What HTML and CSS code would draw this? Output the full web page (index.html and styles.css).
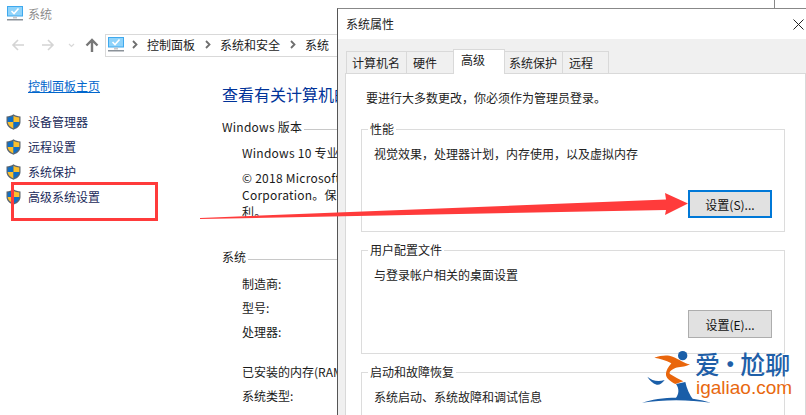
FILE: index.html
```html
<!DOCTYPE html>
<html lang="zh-CN">
<head>
<meta charset="utf-8">
<title>系统属性</title>
<link rel="stylesheet" href="styles.css">
</head>
<body>
<svg class="defs" width="0" height="0" aria-hidden="true">
  <symbol id="pc" viewBox="0 0 16 15">
    <rect x="0" y="0" width="16" height="10.5" fill="#3fa9ee"/>
    <rect x="1" y="1" width="14" height="8.5" fill="#8fd3fa"/>
    <path d="M4.5 5 L7 7.5 L11.5 2.5" fill="none" stroke="#fff" stroke-width="1.6"/>
    <rect x="6" y="10.5" width="4" height="2" fill="#c3c7cc"/>
    <rect x="0" y="13" width="16" height="1.5" fill="#8b9299"/>
  </symbol>
  <symbol id="shield" viewBox="0 0 15 16">
    <path d="M7.5 0.3 C5.5 1.8 3 2.3 0.5 2.4 V8 C0.5 11.8 3.5 14.3 7.5 15.7 C11.5 14.3 14.5 11.8 14.5 8 V2.4 C12 2.3 9.5 1.8 7.5 0.3Z" fill="#5c6670"/>
    <path d="M7.5 1.7 C5.8 2.9 3.8 3.3 1.7 3.4 V8 H7.5Z" fill="#0f6fc6"/>
    <path d="M7.5 1.7 C9.2 2.9 11.2 3.3 13.3 3.4 V8 H7.5Z" fill="#fbc02d"/>
    <path d="M1.7 8 C1.8 11 4.2 13.2 7.5 14.4 V8Z" fill="#fbc02d"/>
    <path d="M13.3 8 C13.2 11 10.8 13.2 7.5 14.4 V8Z" fill="#0f6fc6"/>
  </symbol>
</svg>

<section class="window">
  <header class="titlebar">
    <svg class="pc-icon"><use href="#pc"/></svg>
    <span>系统</span>
  </header>
  <nav class="navbar">
    <svg class="nav-icons" width="105" height="16" viewBox="0 0 105 16">
      <path d="M24 8 H13 M18 3 L13 8 L18 13" fill="none" stroke="#d4d4d4" stroke-width="1.6"/>
      <path d="M42 8 H53 M48 3 L53 8 L48 13" fill="none" stroke="#d4d4d4" stroke-width="1.6"/>
      <path d="M69 7 L71.500 9.500 L74 7" fill="none" stroke="#d8d8d8" stroke-width="1.2"/>
      <path d="M92 15 V3 M86.500 8.500 L92 3 L97.500 8.500" fill="none" stroke="#777" stroke-width="2.400"/>
    </svg>
    <div class="address">
      <svg class="pc-icon addr-icon"><use href="#pc"/></svg>
      <svg class="chev" width="7" height="9" viewBox="0 0 7 9"><path d="M2 1 L5.500 4.500 L2 8" fill="none" stroke="#6e6e6e" stroke-width="1.800"/></svg><span>控制面板</span>
      <svg class="chev" width="7" height="9" viewBox="0 0 7 9"><path d="M2 1 L5.500 4.500 L2 8" fill="none" stroke="#6e6e6e" stroke-width="1.800"/></svg><span>系统和安全</span>
      <svg class="chev" width="7" height="9" viewBox="0 0 7 9"><path d="M2 1 L5.500 4.500 L2 8" fill="none" stroke="#6e6e6e" stroke-width="1.800"/></svg><span>系统</span>
    </div>
  </nav>
  <div class="columns">
    <aside class="sidebar">
      <a class="home">控制面板主页</a>
      <ul class="tasks">
        <li><svg class="shield"><use href="#shield"/></svg>设备管理器</li>
        <li><svg class="shield"><use href="#shield"/></svg>远程设置</li>
        <li><svg class="shield"><use href="#shield"/></svg>系统保护</li>
        <li><svg class="shield"><use href="#shield"/></svg>高级系统设置</li>
      </ul>
    </aside>
    <main class="details">
      <h1>查看有关计算机的基本信息</h1>
      <h2 class="rule-head"><span>Windows 版本</span></h2>
      <div class="indent">
        <p class="edition">Windows 10 专业版</p>
        <p class="copy">© 2018 Microsoft<br>Corporation。保留所有权<br>利。</p>
      </div>
      <h2 class="rule-head system"><span>系统</span></h2>
      <dl class="indent specs">
        <dt>制造商:</dt>
        <dt>型号:</dt>
        <dt>处理器:</dt>
        <dt class="gap">已安装的内存(RAM):</dt>
        <dt>系统类型:</dt>
      </dl>
    </main>
  </div>
</section>

<section class="dialog">
  <header class="dlg-title">
    <span>系统属性</span>
    <svg width="11" height="11" viewBox="0 0 11 11"><path d="M0.500 0.500 L10.500 10.500 M10.500 0.500 L0.500 10.500" stroke="#222" stroke-width="1"/></svg>
  </header>
  <div class="dlg-body">
    <div class="tabs">
      <span class="tab t1">计算机名</span>
      <span class="tab t2">硬件</span>
      <span class="tab active">高级</span>
      <span class="tab t4">系统保护</span>
      <span class="tab t5">远程</span>
    </div>
    <div class="panel">
      <p class="notice">要进行大多数更改&#65292;你必须作为管理员登录。</p>
      <fieldset class="group g1">
        <legend>性能</legend>
        <p>视觉效果&#65292;处理器计划&#65292;内存使用&#65292;以及虚拟内存</p>
        <button class="btn focus">设置(S)...</button>
      </fieldset>
      <fieldset class="group g2">
        <legend>用户配置文件</legend>
        <p>与登录帐户相关的桌面设置</p>
        <button class="btn">设置(E)...</button>
      </fieldset>
      <fieldset class="group g3">
        <legend>启动和故障恢复</legend>
        <p>系统启动、系统故障和调试信息</p>
      </fieldset>
    </div>
  </div>
</section>

<svg class="annotation" width="806" height="415" viewBox="0 0 806 415" aria-hidden="true">
  <rect x="12.500" y="183.500" width="144" height="36" fill="none" stroke="#ff3b3b" stroke-width="3"/>
  <path d="M200 218 L666 199.500 L665 193 L688 203.500 L665 215 L666 210 L200 219Z" fill="#ff3b3b"/>
</svg>

<div class="logo">
  <svg class="logo-mark" width="180" height="75" viewBox="0 0 540 225" aria-hidden="true">
    <circle cx="170" cy="47" r="14" fill="#1a5ea8"/>
    <path d="M85 53 C105 46 125 44 140 50 C160 58 175 70 192 73 C175 82 160 80 148 84 C135 90 128 96 132 102 C145 110 160 118 172 124 L148 132 C132 124 118 114 120 100 C122 86 132 76 136 70 C120 60 100 56 85 53Z" fill="#e9660c"/>
    <path d="M150 132 L178 126 C182 145 190 165 204 182 C185 178 165 176 148 176 C160 162 160 146 150 132Z" fill="#1a5ea8"/>
    <path d="M64 110 C78 122 95 126 116 120 C108 130 100 136 92 134 C80 130 70 120 64 110Z" fill="#1a5ea8"/>
    <path d="M48 188 C100 170 190 166 254 188 C190 178 110 178 48 188Z" fill="#1a5ea8"/>
  </svg>
  <div class="logo-cn">爱 · 尬聊</div>
  <div class="logo-en">igaliao.com</div>
</div>
</body>
</html>
```
FILE: styles.css
```css
html, body {
  margin: 0;
  padding: 0;
  width: 806px;
  height: 415px;
  overflow: hidden;
  background: #fff;
}
body {
  position: relative;
  font-family: "Noto Sans CJK SC", "Noto Sans", sans-serif;
  font-size: 12px;
  color: #1a1a1a;
}
.defs { position: absolute; }
p, h1, h2, ul, dl, dt { margin: 0; padding: 0; font-weight: 400; }

/* Back window */
.window {
  position: absolute;
  left: 0;
  top: 0;
  width: 775px;
  height: 415px;
  border-right: 1px solid #888;
  box-sizing: border-box;
}
.titlebar {
  height: 34px;
  box-sizing: border-box;
  padding: 6px 0 0 7px;
  display: flex;
  align-items: flex-start;
  gap: 5px;
  color: #8c8c8c;
}
.titlebar span { line-height: 16px; }
.pc-icon { width: 16px; height: 15px; flex: none; }
.navbar { height: 23px; display: flex; align-items: center; }
.nav-icons { flex: none; margin-bottom: 2px; }
.address {
  flex: 1;
  height: 23px;
  box-sizing: border-box;
  border: 1px solid #d9d9d9;
  display: flex;
  align-items: center;
  padding: 0 0 2px 2px;
  gap: 9px;
  white-space: nowrap;
}
.addr-icon { margin-right: -2px; }
.chev { flex: none; }
.columns { display: flex; }
.sidebar { width: 222px; flex: none; padding-top: 20px; }
.home {
  display: block;
  margin-left: 28px;
  line-height: 18px;
  color: #0066cc;
  text-decoration: underline;
}
.tasks { list-style: none; margin-top: 14px; padding-left: 6px; }
.tasks li {
  display: flex;
  align-items: center;
  gap: 7px;
  height: 25px;
  color: #1a2a5a;
}
.shield { width: 15px; height: 16px; flex: none; }
.details { width: 115px; flex: none; padding-top: 27px; overflow: hidden; }
.details h1 {
  font-size: 16px;
  line-height: 20px;
  color: #003399;
  white-space: nowrap;
}
.rule-head {
  font-size: 12px;
  line-height: 18px;
  display: flex;
  align-items: center;
  margin-top: 14px;
  letter-spacing: 0.25px;
  white-space: nowrap;
}
.rule-head::after {
  content: "";
  flex: 1;
  height: 1px;
  background: #c8c8c8;
  margin-left: 2px;
  margin-top: 4px;
}
.indent { margin-left: 20px; }
.edition { margin-top: 8px; line-height: 18px; letter-spacing: 0.25px; white-space: nowrap; }
.copy { margin-top: 7px; line-height: 17px; white-space: nowrap; letter-spacing: 0.25px; }
.system { margin-top: 28px; letter-spacing: 0; }
.specs { margin-top: 9px; }
.specs dt { height: 24px; line-height: 18px; white-space: nowrap; }
.specs .gap { margin-top: 16px; }

/* Dialog */
.dialog {
  position: absolute;
  left: 337px;
  top: 8px;
  width: 469px;
  height: 407px;
  box-sizing: border-box;
  border-left: 1px solid #555;
  border-top: 1px solid #888;
  background: #f0f0f0;
}
.dlg-title {
  height: 30px;
  background: #fff;
  display: flex;
  align-items: center;
  justify-content: space-between;
  padding: 0 2px 0 8px;
  line-height: 30px;
  color: #222;
}
.dlg-body { padding: 11px 0 0 7px; }
.tabs { display: flex; align-items: flex-end; height: 23px; padding-left: 2px; position: relative; z-index: 1; }
.tab {
  box-sizing: border-box;
  height: 22px;
  line-height: 21px;
  border: 1px solid #d9d9d9;
  border-bottom: 0;
  margin-left: -1px;
  background: #f0f0f0;
  color: #222;
  white-space: nowrap;
}
.t1 { width: 61px; padding-left: 5px; }
.t2 { width: 48px; padding-left: 6px; }
.active { width: 52px; padding-left: 7px; line-height: 20px; background: #fff; position: relative; z-index: 1; margin-bottom: -1px; height: 25px; }
.t4 { width: 59px; padding-left: 4px; }
.t5 { width: 47px; padding-left: 6px; }
.panel {
  background: #fff;
  border: 1px solid #d9d9d9;
  height: 360px;
  padding: 14px 0 0 15px;
  box-sizing: border-box;
}
.notice { line-height: 20px; color: #222; padding-left: 5px; }
.group {
  margin: 0;
  width: 424px;
  box-sizing: border-box;
  border: 1px solid #dcdcdc;
  padding: 0 0 0 12px;
  position: relative;
}
.group legend { padding: 0 2px; margin-left: -6px; line-height: 16px; color: #222; }
.group p { line-height: 18px; color: #222; margin-top: 8px; }
.g1 { height: 111px; margin-top: 13px; }
.g2 { height: 112px; margin-top: 10px; }
.g3 { height: 70px; margin-top: 10px; }
.btn {
  position: absolute;
  left: 326px;
  box-sizing: border-box;
  width: 84px;
  height: 28px;
  padding: 0;
  font: inherit;
  color: #111;
  background: #e1e1e1;
  border: 1px solid #adadad;
}
.g1 .btn { top: 53px; border: 2px solid #0078d7; }
.g2 .btn { top: 52px; }

/* Annotation and watermark overlay */
.annotation { position: absolute; left: 0; top: 0; }
.logo { position: absolute; left: 626px; top: 340px; width: 180px; height: 75px; }
.logo-mark { position: absolute; left: 0; top: 0; }
.logo-cn {
  position: absolute;
  left: 69px;
  top: 10px;
  font-size: 25px;
  line-height: 26px;
  font-weight: 500;
  color: #1f5fa8;
  white-space: nowrap;
  word-spacing: -8px;
}
.logo-en {
  position: absolute;
  left: 70px;
  top: 37px;
  font-family: "Liberation Sans", sans-serif;
  font-size: 19px;
  line-height: 22px;
  color: #e8680f;
  white-space: nowrap;
}
```
